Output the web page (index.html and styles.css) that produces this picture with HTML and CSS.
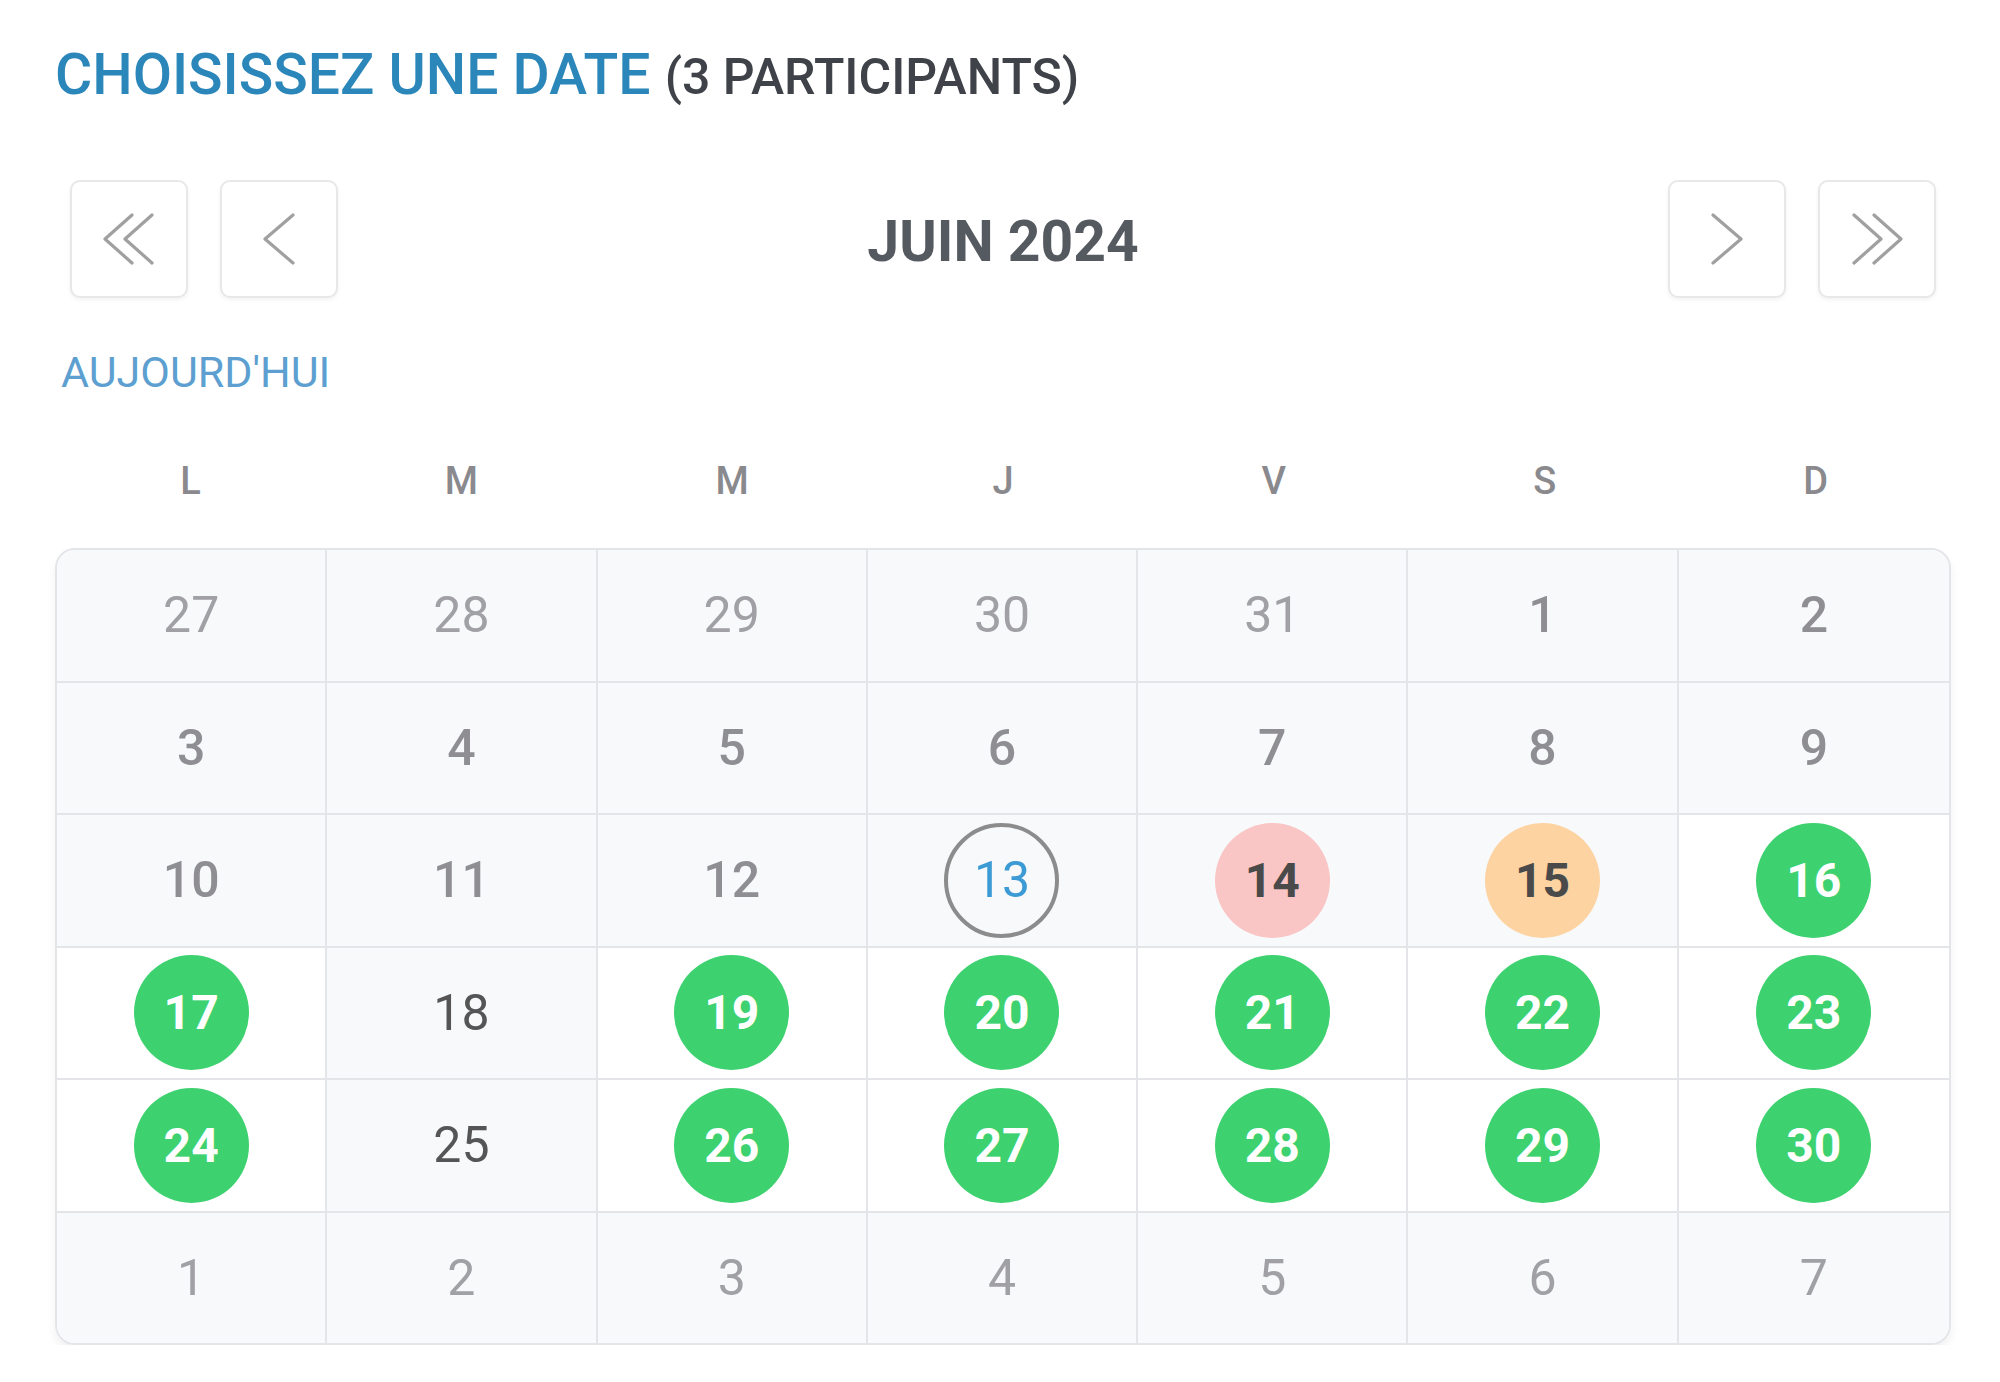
FILE: index.html
```html
<!DOCTYPE html>
<html lang="fr">
  <head>
    <meta charset="UTF-8" />
    <meta name="viewport" content="width=device-width, initial-scale=1.0" />
    <title>Choisissez une date</title>
    <link rel="stylesheet" href="styles.css">
  </head>
  <body>
    <div class="picker">
      <h1 class="title">CHOISISSEZ UNE DATE <span class="count">(3 PARTICIPANTS)</span></h1>

      <div class="nav">
        <button class="nav-btn" aria-label="Année précédente">
          <svg viewBox="0 0 60 60" width="60" height="60"><path d="M33 6 L6 30 L33 54 M53 6 L26 30 L53 54" /></svg>
        </button>
        <button class="nav-btn" aria-label="Mois précédent">
          <svg viewBox="0 0 60 60" width="60" height="60"><path d="M44 6 L16 30 L44 54" /></svg>
        </button>
        <div class="month">JUIN 2024</div>
        <button class="nav-btn" aria-label="Mois suivant">
          <svg viewBox="0 0 60 60" width="60" height="60"><path d="M16 6 L44 30 L16 54" /></svg>
        </button>
        <button class="nav-btn" aria-label="Année suivante">
          <svg viewBox="0 0 60 60" width="60" height="60"><path d="M7 6 L34 30 L7 54 M27 6 L54 30 L27 54" /></svg>
        </button>
      </div>

      <a class="today" href="#">AUJOURD'HUI</a>

      <div class="weekdays">
        <div>L</div><div>M</div><div>M</div><div>J</div><div>V</div><div>S</div><div>D</div>
      </div>

      <div class="month-grid">
        <div class="day out"><span>27</span></div>
        <div class="day out"><span>28</span></div>
        <div class="day out"><span>29</span></div>
        <div class="day out"><span>30</span></div>
        <div class="day out"><span>31</span></div>
        <div class="day past"><span>1</span></div>
        <div class="day past"><span>2</span></div>

        <div class="day past"><span>3</span></div>
        <div class="day past"><span>4</span></div>
        <div class="day past"><span>5</span></div>
        <div class="day past"><span>6</span></div>
        <div class="day past"><span>7</span></div>
        <div class="day past"><span>8</span></div>
        <div class="day past"><span>9</span></div>

        <div class="day past"><span>10</span></div>
        <div class="day past"><span>11</span></div>
        <div class="day past"><span>12</span></div>
        <div class="day current"><span>13</span></div>
        <div class="day busy"><span>14</span></div>
        <div class="day partial"><span>15</span></div>
        <div class="day free"><span>16</span></div>

        <div class="day free"><span>17</span></div>
        <div class="day off"><span>18</span></div>
        <div class="day free"><span>19</span></div>
        <div class="day free"><span>20</span></div>
        <div class="day free"><span>21</span></div>
        <div class="day free"><span>22</span></div>
        <div class="day free"><span>23</span></div>

        <div class="day free"><span>24</span></div>
        <div class="day off"><span>25</span></div>
        <div class="day free"><span>26</span></div>
        <div class="day free"><span>27</span></div>
        <div class="day free"><span>28</span></div>
        <div class="day free"><span>29</span></div>
        <div class="day free"><span>30</span></div>

        <div class="day out"><span>1</span></div>
        <div class="day out"><span>2</span></div>
        <div class="day out"><span>3</span></div>
        <div class="day out"><span>4</span></div>
        <div class="day out"><span>5</span></div>
        <div class="day out"><span>6</span></div>
        <div class="day out"><span>7</span></div>
      </div>
    </div>
  </body>
</html>
```

FILE: styles.css
```css
body {
  margin: 0;
  background: #fff;
  font-family: Roboto, "Liberation Sans", sans-serif;
}

.picker {
  width: 1896px;
  padding: 41px 49px 0 55px;
}

.title {
  margin: 0;
  font-size: 57px;
  line-height: 68px;
  font-weight: 500;
  color: #2b86b9;
}
.count {
  font-size: 50px;
  font-weight: 500;
  color: #3f4349;
}

/* header with the arrows */
.nav {
  display: flex;
  align-items: center;
  gap: 32px;
  margin-top: 69px;
  padding: 0 15px;
}
.nav-btn {
  width: 118px;
  height: 118px;
  padding: 0;
  display: flex;
  align-items: center;
  justify-content: center;
  background: #fff;
  border: 2px solid #e8e8e8;
  border-radius: 10px;
  box-shadow: 0 2px 4px rgba(0, 0, 0, 0.05);
}
.nav-btn path {
  fill: none;
  stroke: #a0a0a0;
  stroke-width: 3.2;
  stroke-linecap: round;
  stroke-linejoin: round;
}
.month {
  flex: 1;
  padding-top: 4px;
  text-align: center;
  font-size: 57px;
  font-weight: 700;
  color: #555a60;
}

.today {
  display: block;
  margin-top: 48px;
  padding-left: 6px;
  font-size: 43px;
  line-height: 52px;
  color: #5c9fd0;
  text-decoration: none;
}

.weekdays {
  display: grid;
  grid-template-columns: repeat(7, 1fr);
  margin-top: 60px;
  font-size: 38px;
  line-height: 46px;
  font-weight: 500;
  color: #8a8a8e;
  text-align: center;
}

/* the month itself */
.month-grid {
  display: grid;
  grid-template-columns: repeat(7, 1fr);
  margin-top: 44px;
  border: 2px solid #e3e5e9;
  border-radius: 20px;
  overflow: hidden;
  box-shadow: 0 6px 10px rgba(0, 0, 0, 0.06);
}
.day {
  height: 130.5px;
  display: flex;
  align-items: center;
  justify-content: center;
  background: #f8f9fb;
  border-right: 2px solid #e3e5e9;
  border-bottom: 2px solid #e3e5e9;
  font-size: 50px;
}
.day:nth-child(7n) {
  border-right: none;
}
.day:nth-last-child(-n+7) {
  border-bottom: none;
}
.day span {
  width: 115px;
  height: 115px;
  box-sizing: border-box;
  display: flex;
  align-items: center;
  justify-content: center;
  border-radius: 50%;
}

.out {
  color: #a0a0a5;
}
.past {
  color: #8e8e93;
  font-weight: 500;
}
.off {
  color: #555;
}
.current span {
  border: 4px solid #8c8c8c;
  color: #3c9ad4;
}
.busy span,
.partial span,
.free span {
  font-size: 48px;
  font-weight: 700;
}
.busy span {
  background: #f9c5c5;
  color: #4a4a4a;
}
.partial span {
  background: #fcd3a1;
  color: #4a4a4a;
}
.free {
  background: #fff;
}
.free span {
  background: #3dd26f;
  color: #fff;
}
```
